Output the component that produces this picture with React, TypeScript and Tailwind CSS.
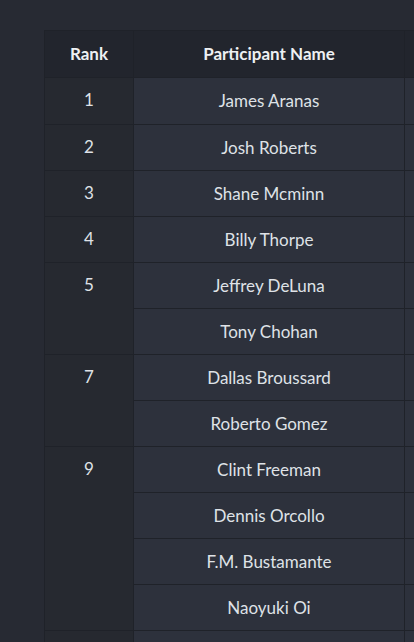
const rows: { rank?: number; span?: number; name: string }[] = [
  { rank: 1, span: 1, name: "James Aranas" },
  { rank: 2, span: 1, name: "Josh Roberts" },
  { rank: 3, span: 1, name: "Shane Mcminn" },
  { rank: 4, span: 1, name: "Billy Thorpe" },
  { rank: 5, span: 2, name: "Jeffrey DeLuna" },
  { name: "Tony Chohan" },
  { rank: 7, span: 2, name: "Dallas Broussard" },
  { name: "Roberto Gomez" },
  { rank: 9, span: 4, name: "Clint Freeman" },
  { name: "Dennis Orcollo" },
  { name: "F.M. Bustamante" },
  { name: "Naoyuki Oi" },
  { rank: 13, span: 1, name: "" },
];

export default function App() {
  return (
    <div
      className="h-[642px] w-[414px] overflow-hidden bg-[#272a33] pl-[44px] pt-[30px] text-[17px] text-[#dfe2e7]"
      style={{ fontFamily: "Lato, 'Noto Sans', sans-serif" }}
    >
      <table className="w-[560px] table-fixed border-collapse">
        <colgroup>
          <col className="w-[89px]" />
          <col className="w-[271px]" />
          <col />
        </colgroup>
        <thead>
          <tr className="h-[47px] bg-[#22252d] font-bold text-[#eef0f3]">
            <th className="border border-[#1f2229] p-0 text-center align-middle">Rank</th>
            <th className="border border-[#1f2229] p-0 text-center align-middle">Participant Name</th>
            <th className="border border-[#1f2229] p-0"></th>
          </tr>
        </thead>
        <tbody>
          {rows.map((r, i) => (
            <tr key={i} className={i === 0 ? "h-[47px]" : "h-[46px]"}>
              {r.rank !== undefined && (
                <td
                  rowSpan={r.span}
                  className="border border-[#1f2229] bg-[#262930] pb-0 pt-[10px] text-center align-top leading-6"
                >
                  {r.rank === 13 ? "" : r.rank}
                </td>
              )}
              <td className="border border-[#1f2229] bg-[#2d313c] p-0 text-center align-middle leading-6">
                {r.name}
              </td>
              <td className="border border-[#1f2229] bg-[#2d313c] p-0"></td>
            </tr>
          ))}
        </tbody>
      </table>
    </div>
  );
}
